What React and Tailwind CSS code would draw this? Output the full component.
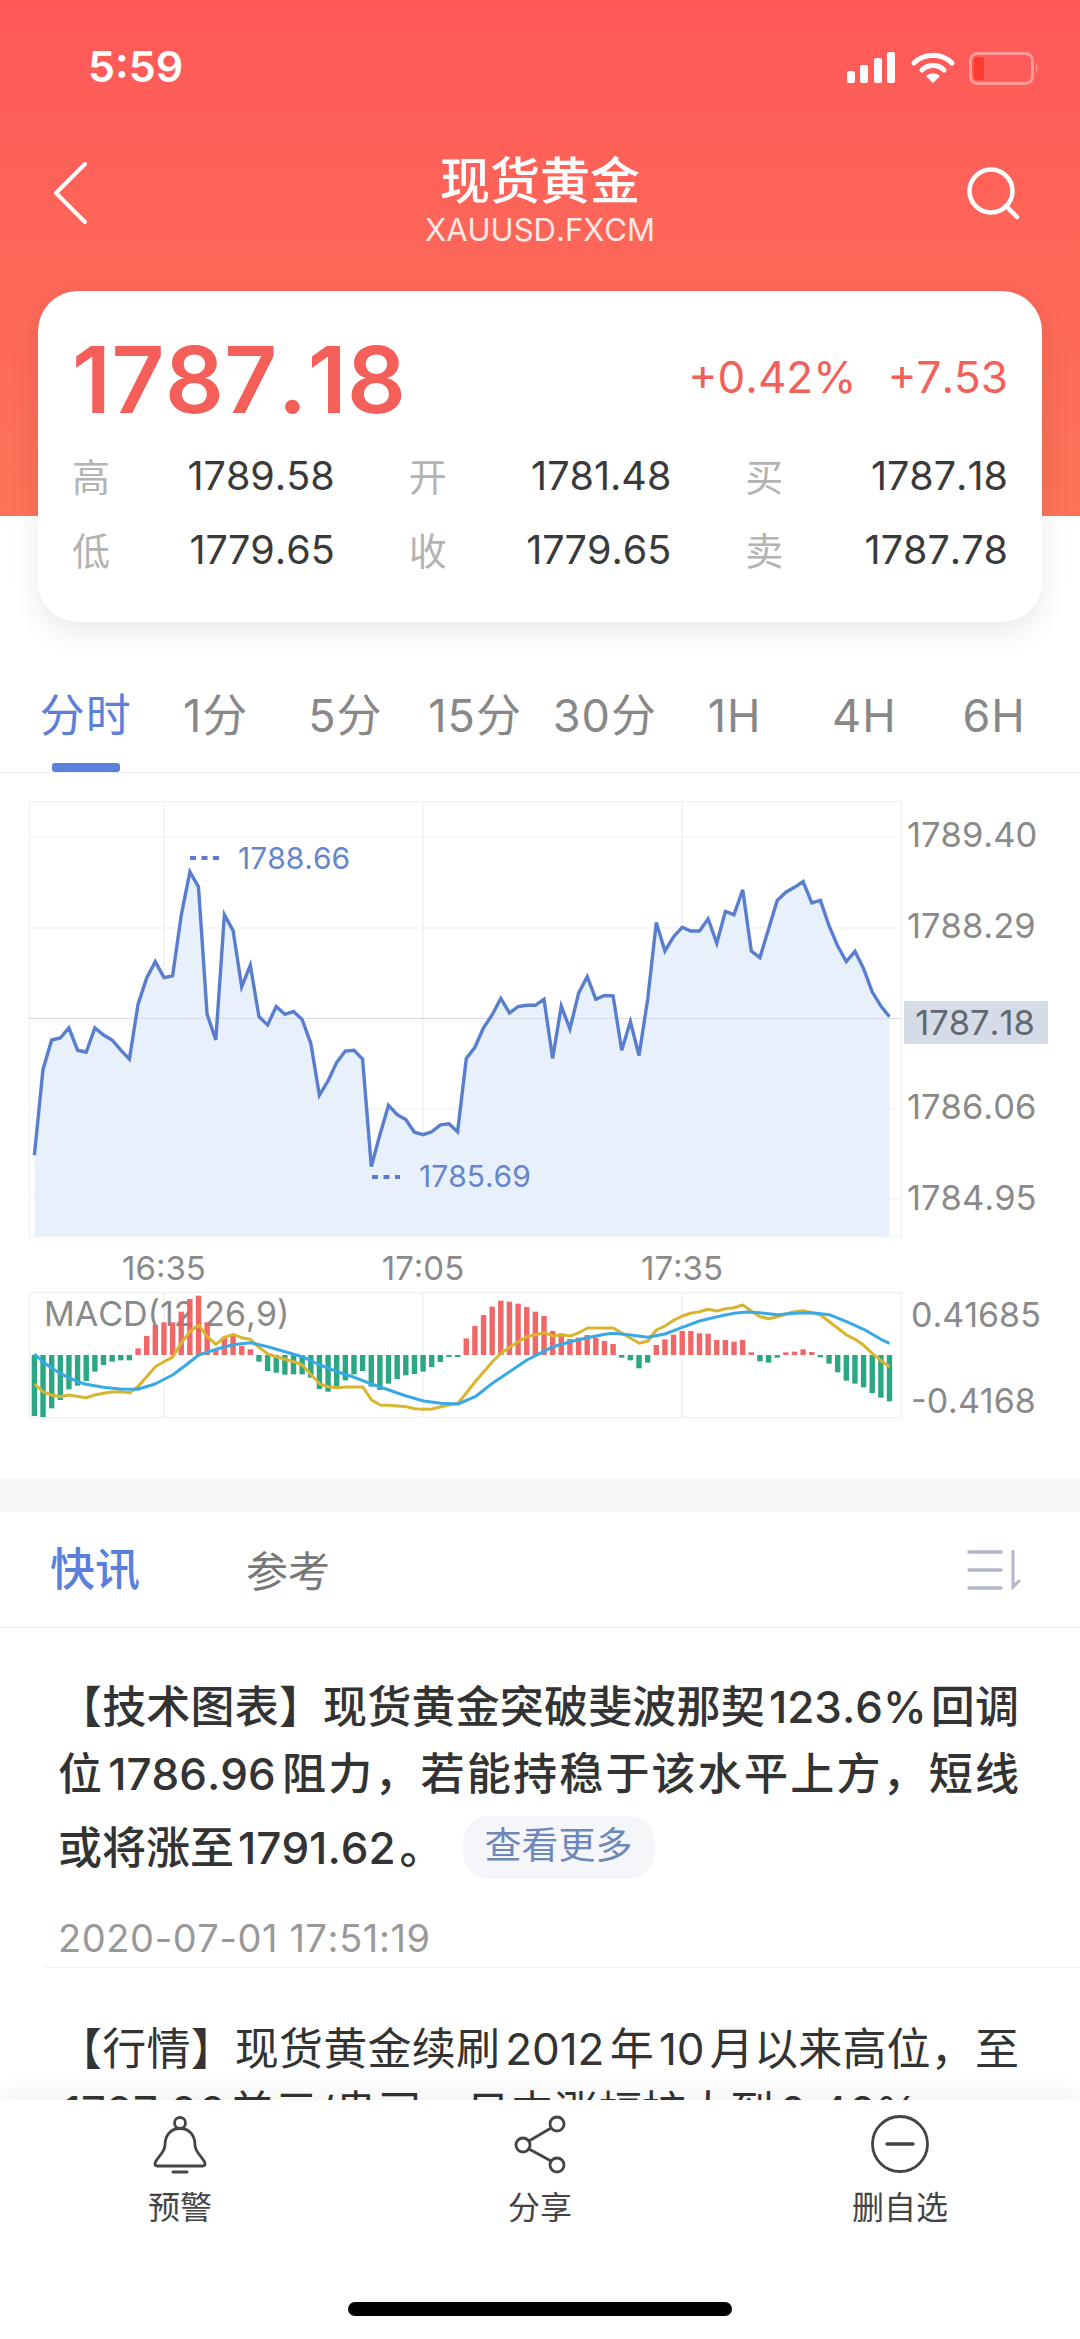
const linePts = [1262,1052,980,975,950,1005,1010,950,968,980,1005,1027,893,828,788,827,823,675,568,605,917,980,673,712,850,797,923,943,898,917,910,930,988,1115,1080,1035,1007,1005,1027,1290,1212,1140,1163,1175,1206,1212,1205,1188,1185,1205,1025,998,950,918,878,914,898,895,895,880,1025,897,953,865,825,880,871,872,1005,935,1018,880,692,762,727,704,713,713,683,743,665,673,612,762,778,708,638,618,606,592,644,638,700,750,788,763,805,862,897,923];

const barTops = [528,531,505,480,448,437,423,395,375,365,361,361,325,288,255,247,247,215,177,167,247,330,290,285,318,328,365,393,398,404,403,403,413,447,455,440,421,403,393,440,450,431,417,406,402,395,381,366,351,351,295,258,225,200,182,185,191,201,215,228,273,280,297,293,285,293,303,312,353,361,385,368,315,298,284,273,273,280,281,300,300,305,300,337,364,368,353,337,335,328,336,352,371,397,422,431,442,459,473,484];

const difLeft = [[100,432],[125,455],[150,465],[175,470],[200,465],[250,473],[275,465],[300,460],[325,456],[350,455],[377,458],[400,440],[426,410],[451,380],[476,365],[501,352],[526,310],[551,275],[577,255],[602,290],[627,313],[652,292],[677,283],[702,293],[727,298],[752,322],[778,342],[803,350],[828,358],[853,365],[878,375],[904,405],[929,432],[954,440],[979,443],[1004,441],[1029,441],[1054,441],[1079,480],[1104,495],[1129,496],[1154,498],[1180,500],[1205,506],[1230,508],[1255,507],[1280,500],[1305,495],[1330,490],[1355,458],[1380,425],[1405,395],[1430,365],[1455,340],[1480,322],[1505,305],[1530,290]];
const difRight = [[12,278],[38,288],[63,284],[88,288],[113,278],[138,264],[163,264],[188,264],[213,264],[238,280],[263,295],[288,310],[313,303],[338,270],[363,258],[388,241],[413,228],[438,220],[463,215],[488,208],[514,213],[539,206],[564,203],[589,195],[614,213],[639,230],[664,236],[689,230],[714,222],[739,215],[765,212],[790,218],[815,225],[840,245],[865,265],[890,285],[915,298],[940,316],[965,340],[990,362],[1015,380]];
const deaLeft = [[100,342],[125,365],[150,385],[175,400],[200,413],[225,425],[250,433],[300,442],[350,447],[400,448],[450,432],[501,405],[540,375],[577,345],[627,328],[677,314],[727,308],[778,320],[828,335],[878,350],[929,375],[979,395],[1029,412],[1079,432],[1129,450],[1180,468],[1230,483],[1280,490],[1330,492],[1380,470],[1430,430],[1480,395],[1530,360]];
const deaRight = [[0,340],[38,320],[88,305],[138,293],[188,283],[213,280],[263,285],[313,292],[363,282],[413,262],[463,243],[514,230],[564,220],[600,216],[639,218],[689,224],[739,220],[790,218],[840,224],[890,245],[940,268],[990,298],[1015,310]];

const K = 2.904;
const stepX = (889.5 - 34.4) / 99;
const priceX = (i) => 34.4 + stepX * i;
const priceY = (v) => 640 + v / 2.45;
const macdY = (v) => 1240 + v / 3;

const priceLine = linePts.map((v, i) => `${priceX(i).toFixed(1)},${priceY(v).toFixed(1)}`).join(" ");
const priceArea = `34.4,1236 ${priceLine} 889.5,1236`;
const curve = (left, right) =>
  [...left.map(([x, y]) => [x / K, macdY(y)]), ...right.map(([x, y]) => [540 + x / K, macdY(y)])]
    .map(([x, y]) => `${x.toFixed(1)},${y.toFixed(1)}`)
    .join(" ");

const priceGrid = [837, 928, 1109, 1199];
const axisLabels = [
  [834, "1789.40"],
  [925, "1788.29"],
  [1106, "1786.06"],
  [1197, "1784.95"],
];
const timeLabels = [
  [164, "16:35"],
  [423, "17:05"],
  [682, "17:35"],
];

function KLineChart() {
  const zero = macdY(345);
  return (
    <svg viewBox="0 773 1080 705" width="1080" height="705" className="block">
      <rect x="29.5" y="801.5" width="872" height="435" fill="#fff" stroke="#f1f1f1" strokeWidth="1.5" />
      {priceGrid.map((y) => (
        <line key={y} x1="29" x2="902" y1={y} y2={y} stroke="#f5f5f5" strokeWidth="1.5" />
      ))}
      {timeLabels.map(([x]) => (
        <line key={x} x1={x} x2={x} y1="801" y2="1236" stroke="#f1f1f3" strokeWidth="1.5" />
      ))}
      <polygon points={priceArea} fill="#e8f0fb" />
      <line x1="29" x2="902" y1="1018.5" y2="1018.5" stroke="#d5dae6" strokeWidth="1" />
      <polyline points={priceLine} fill="none" stroke="#5a7ecf" strokeWidth="3.4" strokeLinejoin="miter" />

      <line x1="190" x2="219" y1="858" y2="858" stroke="#5a7ecf" strokeWidth="4" strokeDasharray="6 5.5" />
      <text x="238" y="858" dominantBaseline="central" fontSize="30" fill="#6585cc">1788.66</text>
      <line x1="372" x2="400" y1="1177" y2="1177" stroke="#5a7ecf" strokeWidth="4" strokeDasharray="6 5.5" />
      <text x="419" y="1176" dominantBaseline="central" fontSize="30" fill="#6585cc">1785.69</text>

      {axisLabels.map(([y, t]) => (
        <text key={t} x="907" y={y} dominantBaseline="central" fontSize="34.5" fill="#8a8a8a">{t}</text>
      ))}
      <rect x="904" y="1001" width="144" height="43" fill="#d5dbe7" />
      <text x="975" y="1022" textAnchor="middle" dominantBaseline="central" fontSize="34.5" fill="#636870">1787.18</text>

      {timeLabels.map(([x, t]) => (
        <text key={t} x={x} y="1268" textAnchor="middle" dominantBaseline="central" fontSize="33" fill="#8a8a8a">{t}</text>
      ))}

      <rect x="29.5" y="1292.5" width="872" height="125" fill="#fff" stroke="#f1f1f1" strokeWidth="1.5" />
      {timeLabels.map(([x]) => (
        <line key={x} x1={x} x2={x} y1="1292" y2="1417" stroke="#f1f1f3" strokeWidth="1.5" />
      ))}
      <text x="44" y="1313" dominantBaseline="central" fontSize="34" fill="#8a8a8a">MACD(12,26,9)</text>
      {barTops.map((top, i) => {
        const y = macdY(top);
        const up = y < zero;
        return (
          <rect
            key={i}
            x={priceX(i) - 2.7}
            y={up ? y : zero}
            width="5.4"
            height={Math.abs(y - zero)}
            fill={up ? "#f05b5b" : "#2ba784"}
            fillOpacity={up ? 0.93 : 1}
          />
        );
      })}
      <polyline points={curve(difLeft, difRight)} fill="none" stroke="#d9b42e" strokeWidth="3" strokeLinejoin="round" />
      <polyline points={curve(deaLeft, deaRight)} fill="none" stroke="#38a9e6" strokeWidth="3" strokeLinejoin="round" />

      <text x="911" y="1314" dominantBaseline="central" fontSize="34" fill="#8a8a8a">0.41685</text>
      <text x="911" y="1400" dominantBaseline="central" fontSize="34" fill="#8a8a8a">-0.4168</text>
    </svg>
  );
}

function StatusIcons() {
  return (
    <svg width="196" height="36" viewBox="0 0 196 36" className="mt-[5px] block">
      <g fill="#fff">
        <rect x="0" y="21" width="8" height="12" rx="2" />
        <rect x="13" y="15" width="8" height="18" rx="2" />
        <rect x="27" y="8" width="8" height="25" rx="2" />
        <rect x="40" y="2" width="8" height="31" rx="2" />
        <path d="M79 26 A10 10 0 0 1 93 26 L86 33 Z" />
      </g>
      <g fill="none" stroke="#fff" strokeWidth="5" strokeLinecap="round">
        <path d="M67 13 A27 27 0 0 1 105 13" />
        <path d="M75 20 A16 16 0 0 1 97 20" />
      </g>
      <rect x="123.5" y="3.5" width="62" height="30" rx="7" fill="none" stroke="#ffffff" strokeOpacity="0.38" strokeWidth="3" />
      <rect x="127" y="7" width="10" height="23" rx="2" fill="#ff3b30" />
      <path d="M189 13 Q192 18 189 24 Z" fill="#ffffff" fillOpacity="0.4" />
    </svg>
  );
}

function Quote({ label, value }) {
  return (
    <div className="flex items-center justify-between">
      <span className="text-[38px] text-[#b3b3b3]">{label}</span>
      <span className="text-[39.5px] text-[#3a3a3a]">{value}</span>
    </div>
  );
}

const periods = ["分时", "1分", "5分", "15分", "30分", "1H", "4H", "6H"];

function ActionIcon({ children }) {
  return (
    <svg width="60" height="60" viewBox="0 0 60 60" fill="none" stroke="#444" strokeWidth="2.8" strokeLinecap="round" strokeLinejoin="round" className="block">
      {children}
    </svg>
  );
}

export default function App() {
  return (
    <div className="relative h-[2339px] w-[1080px] overflow-hidden bg-white font-['Inter','Noto_Sans_CJK_SC',sans-serif] [font-kerning:none]">
      <header className="h-[516px] bg-linear-to-b from-[#ff5858] to-[#fc7358] text-white">
        <div className="flex h-[130px] items-center justify-between pl-[88px] pr-[37px]">
          <span className="mt-[2px] text-[43px] font-semibold">5:59</span>
          <StatusIcons />
        </div>
        <div className="grid h-[161px] grid-cols-[1fr_auto_1fr] items-start">
          <svg width="40" height="66" viewBox="0 0 40 66" className="ml-[51px] mt-[30px] block" fill="none" stroke="#fff" strokeWidth="4" strokeLinecap="round" strokeLinejoin="round">
            <path d="M34 4 L5 33 L34 62" />
          </svg>
          <div className="mt-[22px] text-center">
            <div className="text-[50px] font-medium leading-[58px]">现货黄金</div>
            <div className="text-[31px] leading-[40px] text-white/85">XAUUSD.FXCM</div>
          </div>
          <svg width="60" height="60" viewBox="0 0 60 60" className="ml-auto mr-[57px] mt-[34px] block" fill="none" stroke="#fff" strokeWidth="4.5" strokeLinecap="round">
            <circle cx="28" cy="27" r="21.5" />
            <path d="M43 42 L54 53" />
          </svg>
        </div>
        <section className="mx-[38px] h-[331px] rounded-[40px] bg-white pl-[34px] pr-[34px] pt-[44px] shadow-[0_10px_30px_rgba(0,0,0,0.09)]">
          <div className="flex h-[90px] items-center justify-between">
            <span className="text-[92px] font-semibold leading-[90px] tracking-[0.5px] text-[#f55f5a]">1787.18</span>
            <div className="mb-[6px] flex gap-[31px] text-[44px] text-[#f2605c]">
              <span>+0.42%</span>
              <span>+7.53</span>
            </div>
          </div>
          <div className="mt-[15px] grid grid-cols-3 gap-x-[74px]">
            <div className="contents [&>div]:h-[74px]">
              <Quote label="高" value="1789.58" />
              <Quote label="开" value="1781.48" />
              <Quote label="买" value="1787.18" />
              <Quote label="低" value="1779.65" />
              <Quote label="收" value="1779.65" />
              <Quote label="卖" value="1787.78" />
            </div>
          </div>
        </section>
      </header>

      <nav className="flex h-[257px] flex-col justify-end border-b border-[#eeeeee]">
        <div className="grid grid-cols-8 px-[21px]">
          {periods.map((p, i) => (
            <div key={p} className="flex flex-col items-center">
              <span className={`text-[45px] leading-[60px] tracking-[1px] ${i === 0 ? "text-[#5b80d8]" : "text-[#888888]"}`}>{p}</span>
              <span className={`mt-[17px] h-[9px] w-[68px] rounded-[3px] ${i === 0 ? "bg-[#5b80dc]" : "bg-transparent"}`} />
            </div>
          ))}
        </div>
      </nav>

      <KLineChart />

      <div className="h-[34px] bg-[#f6f6f6]" />

      <div className="flex h-[116px] items-center border-b border-[#f0f0f0] pl-[50px] pr-[59px]">
        <span className="text-[45px] font-medium text-[#5b80dc]">快讯</span>
        <span className="ml-[106px] mt-[3px] text-[42px] text-[#777777]">参考</span>
        <svg width="54" height="40" viewBox="0 0 54 40" className="ml-auto block" fill="none" stroke="#b4b6cb" strokeWidth="3.5" strokeLinecap="round">
          <path d="M2 2 H34 M2 20 H34 M2 38 H34" />
          <path d="M46 1 V37 L52 31" strokeWidth="3" />
        </svg>
      </div>

      <article className="pb-[4px] pl-[58px] pr-[61px] pt-[46px]">
        <p className="text-justify text-[44px] font-medium leading-[67px] text-[#333333]">
          【技术图表】现货黄金突破斐波那契<span className="mx-[4px]">123.6%</span>回调位<span className="mx-[4px]">1786.96</span>阻力，若能持稳于该水平上方，短线或将涨至<span className="mx-[4px]">1791.62</span>。
          <span className="mb-[16px] ml-[19px] mt-[8px] inline-block h-[63px] rounded-[26px] bg-[#f5f6f9] px-[22px] align-middle text-[37px] font-normal leading-[60px] text-[#6d88b8]">查看更多</span>
        </p>
        <div className="mt-[18px] text-[38px] leading-[50px] tracking-[0.6px] text-[#999999]">2020-07-01 17:51:19</div>
      </article>

      <article className="ml-[45px] border-t border-[#f0f0f0] pl-[13px] pr-[61px] pt-[50px]">
        <p className="text-justify text-[44px] leading-[63px] text-[#333333]">
          【行情】现货黄金续刷<span className="mx-[5px]">2012</span>年<span className="mx-[5px]">10</span>月以来高位，至<span className="mx-[5px]">1787.96</span>美元/盎司，日内涨幅扩大到<span className="mx-[5px]">0.46%</span>
        </p>
      </article>

      <footer className="absolute inset-x-0 bottom-0 h-[239px] bg-white pt-[15px] shadow-[0_-8px_22px_rgba(0,0,0,0.05)]">
        <div className="grid grid-cols-3">
          <div className="flex flex-col items-center">
            <ActionIcon>
              <circle cx="30" cy="8" r="5.5" />
              <path d="M30 13.5 C20 13.5 15 21 15 30 C15 38 5 44 5 49 Q5 51 8 51 L52 51 Q55 51 55 49 C55 44 45 38 45 30 C45 21 40 13.5 30 13.5 Z" />
              <path d="M23 57 H37" strokeWidth="3" />
            </ActionIcon>
            <span className="mt-[13px] text-[32px] leading-[40px] text-[#444444]">预警</span>
          </div>
          <div className="flex flex-col items-center">
            <ActionIcon>
              <circle cx="47" cy="9" r="7" />
              <circle cx="13" cy="30" r="7" />
              <circle cx="47" cy="50" r="7" />
              <path d="M19 26 L41 13 M19 34 L41 46" />
            </ActionIcon>
            <span className="mt-[13px] text-[32px] leading-[40px] text-[#444444]">分享</span>
          </div>
          <div className="flex flex-col items-center">
            <ActionIcon>
              <circle cx="30" cy="29" r="27.5" />
              <path d="M17 29 H43" strokeWidth="3.5" />
            </ActionIcon>
            <span className="mt-[13px] text-[32px] leading-[40px] text-[#444444]">删自选</span>
          </div>
        </div>
        <div className="mx-auto mt-[74px] h-[14px] w-[384px] rounded-full bg-black" />
      </footer>
    </div>
  );
}
